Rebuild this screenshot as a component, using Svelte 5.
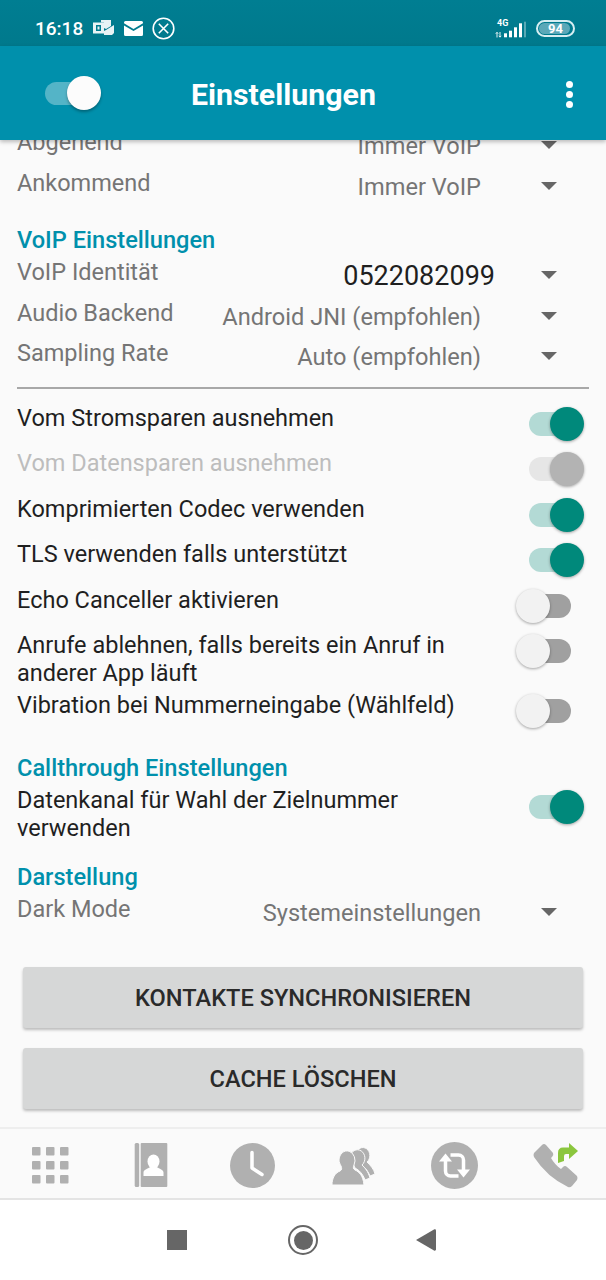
<script>
  const group1 = [
    { label: 'Abgehend', value: 'Immer VoIP' },
    { label: 'Ankommend', value: 'Immer VoIP' }
  ];
  const group2 = [
    { label: 'VoIP Identität', value: '0522082099', strong: true },
    { label: 'Audio Backend', value: 'Android JNI (empfohlen)' },
    { label: 'Sampling Rate', value: 'Auto (empfohlen)' }
  ];
  const switches = [
    { label: 'Vom Stromsparen ausnehmen', on: true },
    { label: 'Vom Datensparen ausnehmen', on: true, disabled: true },
    { label: 'Komprimierten Codec verwenden', on: true },
    { label: 'TLS verwenden falls unterstützt', on: true },
    { label: 'Echo Canceller aktivieren', on: false },
    { label: 'Anrufe ablehnen, falls bereits ein Anruf in anderer App läuft', on: false, tall: true },
    { label: 'Vibration bei Nummerneingabe (Wählfeld)', on: false }
  ];
</script>

{#snippet select(item)}
  <div class="select-row">
    <span class="label">{item.label}</span>
    <span class="value" class:strong={item.strong}>{item.value}</span>
    <span class="arrow"></span>
  </div>
{/snippet}

{#snippet toggle(on, disabled)}
  <span class="switch" class:on class:disabled><span class="thumb"></span></span>
{/snippet}

<div class="phone">
  <header class="status">
    <div class="status-left">
      <span class="time">16:18</span>
      <svg class="i-outlook" width="21" height="16" viewBox="0 0 21 16">
        <path fill="#e8f3f5" fill-rule="evenodd" d="M0 2.500h11v11H0zM3 5v6h5V5z" />
        <rect x="4.500" y="6.500" width="2" height="3" fill="#e8f3f5" />
        <path fill="#e8f3f5" d="M8 0h10v6l-5 3-2-1V2.500H8zM13 10l8-5v8l-2 2H11v-4z" />
      </svg>
      <svg width="19" height="15" viewBox="0 0 19 15">
        <path fill="#fff" d="M1.500 0h16A1.500 1.500 0 0 1 19 1.500v.8l-9.500 5.600L0 2.300v-.8A1.500 1.500 0 0 1 1.500 0zM0 4.400l9.500 5.600L19 4.400v9.100a1.500 1.500 0 0 1-1.500 1.500h-16A1.500 1.500 0 0 1 0 13.500z" />
      </svg>
      <svg class="i-close" width="23" height="23" viewBox="0 0 23 23" fill="none" stroke="#fff" stroke-width="1.600">
        <circle cx="11.500" cy="11.500" r="10.300" />
        <path d="M6.800 6.800l9.400 9.400M16.200 6.800l-9.400 9.400" />
      </svg>
    </div>
    <div class="status-right">
      <div class="signal">
        <span class="net">4G</span>
        <svg width="32" height="17" viewBox="0 0 32 17">
          <path fill="none" stroke="#e6f2f4" stroke-width="1" d="M2 16.500v-5M.8 12.700 2 11.300l1.200 1.400M5 11v5M3.800 14.800 5 16.200l1.200-1.400" />
          <rect x="9" y="12.300" width="3" height="4" fill="#fff" />
          <rect x="14" y="9.700" width="3" height="6.600" fill="#fff" />
          <rect x="19" y="6.300" width="3" height="10" fill="#fff" />
          <rect x="24" y="2.300" width="3" height="14" fill="#fff" />
          <rect x="29" y="0.700" width="2" height="15.600" fill="#fff" opacity=".35" />
        </svg>
      </div>
      <div class="battery"><span class="fill"></span><span class="pct">94</span></div>
    </div>
  </header>

  <div class="appbar">
    <span class="main-switch"><span class="main-thumb"></span></span>
    <h1>Einstellungen</h1>
    <span class="dots"><i></i><i></i><i></i></span>
  </div>

  <main>
    <div class="content">
      {#each group1 as item}{@render select(item)}{/each}
      <h2 class="first">VoIP Einstellungen</h2>
      {#each group2 as item}{@render select(item)}{/each}
      <hr />
      {#each switches as s}
        <div class="switch-row" class:tall={s.tall}>
          <span class="text" class:muted={s.disabled}>{s.label}</span>
          {@render toggle(s.on, s.disabled)}
        </div>
      {/each}
      <h2 class="callthrough">Callthrough Einstellungen</h2>
      <div class="switch-row tall data">
        <span class="text">Datenkanal für Wahl der Zielnummer verwenden</span>
        {@render toggle(true, false)}
      </div>
      <h2 class="display">Darstellung</h2>
      {@render select({ label: 'Dark Mode', value: 'Systemeinstellungen' })}
      <button class="first-btn">KONTAKTE SYNCHRONISIEREN</button>
      <button>CACHE LÖSCHEN</button>
    </div>
  </main>

  <nav class="tabs">
    <span class="tab">
      <svg width="37" height="37" viewBox="0 0 37 37" fill="#b0b0b0">
        {#each [0, 14, 28] as y}
          {#each [0, 14, 28] as x}
            <rect x={x} y={y} width="8.500" height="8.500" rx="1" />
          {/each}
        {/each}
      </svg>
    </span>
    <span class="tab">
      <svg width="35" height="44" viewBox="0 0 35 44">
        <rect x="0.700" y="0" width="4.500" height="44" rx="1.500" fill="#b0b0b0" />
        <rect x="6.700" y="0" width="26.600" height="44" rx="1" fill="#b0b0b0" />
        <ellipse cx="19.500" cy="18.500" rx="6" ry="7" fill="#fff" />
        <path fill="#fff" d="M9.500 33v-3.500c0-2.500 4-4 7-5.500h6c3 1.500 7 3 7 5.500V33z" />
      </svg>
    </span>
    <span class="tab">
      <svg width="45" height="45" viewBox="0 0 45 45">
        <circle cx="22.500" cy="22.500" r="22.500" fill="#b0b0b0" />
        <path d="M22 9.500v15.500l10 6.500" fill="none" stroke="#fff" stroke-width="3.500" stroke-linecap="round" stroke-linejoin="round" />
      </svg>
    </span>
    <span class="tab">
      <svg width="44" height="42" viewBox="0 0 44 42" fill="#b0b0b0" stroke="#fafafa" stroke-width="1">
        <path d="M24 10a7 8 0 1 1 11 8c3 3 7 7 8 12l-5 2c-2-5-5-9-9-11z" />
        <path d="M18 13a7.500 8.500 0 1 1 12 8c3 3 6 6 8 13l-5 2c-2-6-6-10-10-12z" />
        <path d="M7 16a8 9.500 0 1 1 15 5c-1 2-1 4 1 5 4 2 8 5 9 15H0c0-7 3-12 8-14 2-1 2-3 1-5-1-2-2-4-2-6z" />
      </svg>
    </span>
    <span class="tab">
      <svg width="47" height="47" viewBox="0 0 47 47">
        <circle cx="23.500" cy="23.500" r="23.500" fill="#b0b0b0" />
        <path d="M14.500 18v11a5 5 0 0 0 5 5h8M32.500 29V18a5 5 0 0 0-5-5h-8" fill="none" stroke="#fff" stroke-width="3.500" />
        <path fill="#fff" d="M8 19.500l6.500-8 6.500 8zM26 27.500l6.500 8 6.500-8z" />
      </svg>
    </span>
    <span class="tab">
      <svg width="46" height="45" viewBox="0 0 46 45">
        <path fill="#b0b0b0" d="M1 10 9 2Q11 0 13 2L20 10Q21 12 19 14L18 15Q22 22 28 26L30 24Q32 22 34 24L44 33Q45 35 44 37L39 43Q37 45 35 44Q14 34 1 14Q0 12 1 10Z" />
        <path fill="#8bc63e" d="M25 20V10Q25 4.500 30 4.500H36V0L45 8 36 16V11H33Q31 11 31 13V18Z" />
      </svg>
    </span>
  </nav>

  <nav class="system">
    <span class="square"></span>
    <span class="home"><span></span></span>
    <svg class="back" width="20" height="22" viewBox="0 0 20 22"><path fill="#666" d="M0 11 18 .500c1-.500 2 0 2 1v19c0 1-1 1.500-2 1z" /></svg>
  </nav>
</div>

<style>
  :global(body) { margin: 0; background: #fff; }
  .phone {
    width: 606px;
    height: 1280px;
    display: flex;
    flex-direction: column;
    overflow: hidden;
    font-family: Roboto, "Liberation Sans", sans-serif;
    color: #1f1f1f;
  }
  .status {
    height: 46px;
    flex: none;
    box-sizing: border-box;
    padding: 11px 31px 0 35px;
    background: linear-gradient(#007e92, #00798c);
    display: flex;
    justify-content: space-between;
    align-items: center;
    color: #fff;
  }
  .status-left { display: flex; align-items: center; gap: 10px; }
  .time { font-size: 19px; font-weight: 500; }
  .i-outlook { margin-top: -2px; }
  .i-close { margin-left: -1px; }
  .status-right { display: flex; align-items: center; gap: 9px; }
  .signal { position: relative; width: 32px; height: 17px; margin-top: 1px; }
  .net { position: absolute; left: 2px; top: -2px; font-size: 9px; font-weight: 700; color: #fff; line-height: 8px; }
  .battery {
    position: relative;
    width: 39px;
    height: 17px;
    box-sizing: border-box;
    border: 2px solid #d6eef2;
    border-radius: 9px;
    display: flex;
    align-items: center;
    justify-content: center;
  }
  .fill { position: absolute; left: 1px; top: 1px; bottom: 1px; right: 3px; background: #5aa8b8; border-radius: 6px; }
  .pct { position: relative; font-size: 13px; font-weight: 700; color: #fff; }
  .appbar {
    height: 94px;
    flex: none;
    background: #0090ac;
    box-shadow: 0 2px 4px rgba(0, 0, 0, .25);
    position: relative;
    z-index: 2;
    display: flex;
    align-items: center;
    box-sizing: border-box;
    padding-left: 45px;
    padding-right: 33px;
  }
  .main-switch {
    position: relative;
    width: 46px;
    height: 23px;
    border-radius: 12px;
    background: rgba(255, 255, 255, .33);
  }
  .main-thumb {
    position: absolute;
    right: -10px;
    top: -6px;
    width: 34px;
    height: 34px;
    border-radius: 50%;
    background: #fcfcfc;
    box-shadow: 0 2px 3px rgba(0, 0, 0, .3);
  }
  h1 {
    margin: 0 0 0 100px;
    font-size: 30.300px;
    font-weight: 700;
    color: #fff;
    line-height: 36px;
    flex: 1;
    padding-top: 3px;
  }
  .dots { display: flex; flex-direction: column; gap: 3px; padding-top: 2px; }
  .dots i { width: 7px; height: 7px; border-radius: 50%; background: #fff; display: block; }

  main { flex: 1; min-height: 0; overflow: hidden; background: #fafafa; }
  .content { margin-top: -12px; padding: 0 17px; display: flex; flex-direction: column; }

  .select-row { position: relative; height: 40.500px; flex: none; display: flex; }
  .label { font-size: 23.500px; line-height: 28px; color: #757575; }
  .value {
    position: absolute;
    right: 108px;
    top: 4px;
    font-size: 23.600px;
    line-height: 28px;
    color: #757575;
    white-space: nowrap;
  }
  .value.strong { font-size: 27px; color: #1f1f1f; right: 94px; }
  .arrow {
    position: absolute;
    left: 524px;
    top: 13px;
    width: 0;
    height: 0;
    border-left: 8px solid transparent;
    border-right: 8px solid transparent;
    border-top: 8px solid #666;
  }
  h2 {
    margin: 0;
    font-size: 23.600px;
    font-weight: 500;
    line-height: 28px;
    color: #0090ac;
    flex: none;
  }
  h2.first { margin-top: 17px; height: 32px; }
  hr { margin: 7px 0 15px; border: 0; border-top: 2px solid #a8a8a8; width: 572px; flex: none; }
  .switch-row { display: flex; justify-content: space-between; height: 45.500px; flex: none; position: relative; }
  .switch-row.tall { height: 60px; }
  .switch-row.data { height: 77px; }
  .text { font-size: 23.500px; line-height: 28px; color: #1f1f1f; width: 465px; }
  .text.muted { color: #bdbdbd; }
  .switch {
    position: absolute;
    left: 512px;
    top: 8px;
    width: 42px;
    height: 24px;
    border-radius: 12px;
    background: #a0a0a0;
  }
  .switch.on { background: #b3dad5; }
  .switch.disabled { background: #e6e6e6; }
  .thumb {
    position: absolute;
    left: -13px;
    top: -5px;
    width: 34px;
    height: 34px;
    border-radius: 50%;
    background: #f2f2f2;
    box-shadow: 0 1px 3px rgba(0, 0, 0, .35);
  }
  .on .thumb { left: auto; right: -13px; background: #00897b; }
  .disabled .thumb { background: #b3b3b3; }
  .data .switch { top: 9px; }
  h2.callthrough { margin-top: 17px; height: 32px; }
  h2.display { height: 32px; }
  button {
    font: 500 23.600px Roboto, "Liberation Sans", sans-serif;
    color: #2a2a2a;
    background: #d6d7d7;
    border: 0;
    border-radius: 3px;
    box-shadow: 0 2px 3px rgba(0, 0, 0, .25);
    width: 560px;
    height: 61px;
    margin: 0 0 20px 6px;
    padding: 0;
    flex: none;
  }
  .first-btn { margin-top: 32px; }

  .tabs {
    height: 73px;
    flex: none;
    box-sizing: border-box;
    background: #fafafa;
    border-top: 2px solid #eee;
    border-bottom: 2px solid #e4e4e4;
    padding-top: 3px;
    display: flex;
  }
  .tab { flex: 1; display: flex; align-items: center; justify-content: center; }
  .system {
    height: 80px;
    flex: none;
    background: #fff;
    display: flex;
    align-items: center;
    justify-content: center;
    gap: 100px;
    padding-right: 3px;
  }
  .square { width: 20px; height: 20px; background: #666; }
  .home {
    width: 30px;
    height: 30px;
    box-sizing: border-box;
    border: 2.500px solid #666;
    border-radius: 50%;
    display: flex;
    align-items: center;
    justify-content: center;
    margin-left: 1px;
  }
  .home span { width: 19px; height: 19px; border-radius: 50%; background: #666; }
  .back { margin-left: -2px; }
</style>
